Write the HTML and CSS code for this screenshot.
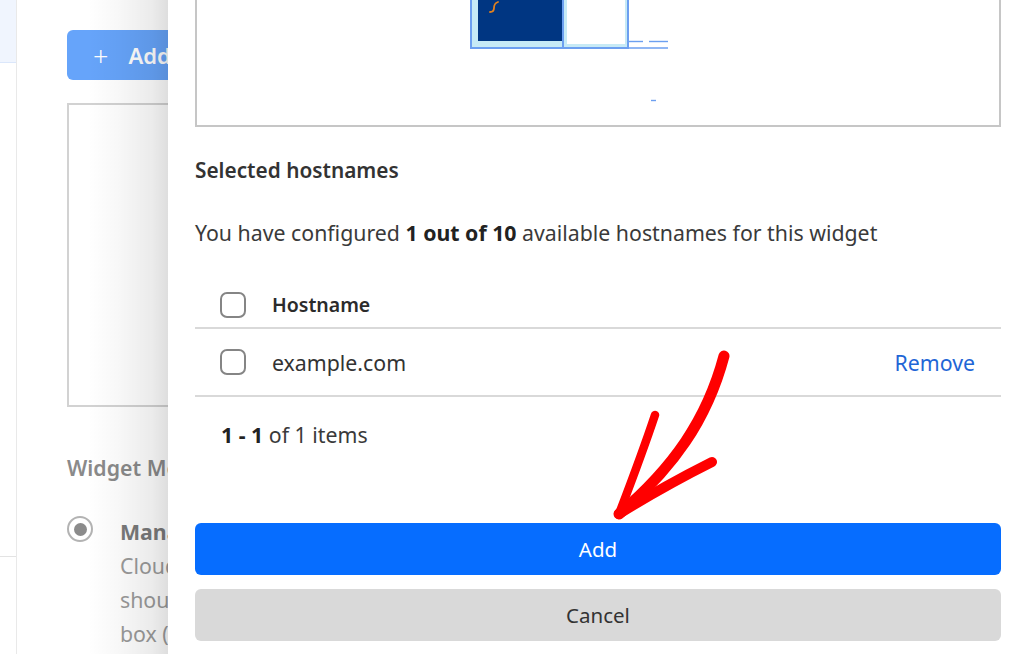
FILE: index.html
```html
<!DOCTYPE html>
<html lang="en">
<head>
<meta charset="utf-8">
<title>Selected hostnames</title>
<link rel="stylesheet" href="styles.css">
</head>
<body>
<div class="page">
  <div class="bg">
    <div class="rail">
      <div class="rail-top"></div>
      <div class="rail-mid"></div>
    </div>
    <div class="bg-main">
      <div class="bg-btn"><span class="plus">+</span><span>Add</span></div>
      <div class="bg-box"></div>
      <div class="bg-label">Widget Mode</div>
      <div class="bg-radio-row">
        <span class="radio"><span class="dot"></span></span>
        <div class="radio-text">
          <div class="radio-title">Managed</div>
          <div>Cloudflare</div>
          <div>should</div>
          <div>box (</div>
        </div>
      </div>
    </div>
    <div class="shade"></div>
  </div>

  <div class="drawer">
    <div class="preview">
      <svg class="preview-art" width="802" height="124" viewBox="197 0 802 124" xmlns="http://www.w3.org/2000/svg">
        <rect x="471" y="-2" width="92" height="50" fill="#c6eaf6" stroke="#6c9ff0" stroke-width="2"/>
        <rect x="478" y="-2" width="84" height="43" fill="#003682"/>
        <path d="M498,2 C495,3 494,6 494,8 C494,11 493,12 490,12" fill="none" stroke="#e0801e" stroke-width="1.8" stroke-linecap="round"/>
        <rect x="563" y="-2" width="65" height="50" fill="#c6eaf6" stroke="#6c9ff0" stroke-width="2"/>
        <rect x="567" y="-2" width="58" height="46" fill="#ffffff"/>
        <line x1="629" y1="41.5" x2="643" y2="41.5" stroke="#6c9ff0" stroke-width="1.4"/>
        <line x1="649" y1="41.5" x2="668" y2="41.5" stroke="#6c9ff0" stroke-width="1.4"/>
        <line x1="629" y1="48" x2="668" y2="48" stroke="#6c9ff0" stroke-width="1.4"/>
        <line x1="651" y1="100.5" x2="656" y2="100.5" stroke="#6c9ff0" stroke-width="1.4"/>
      </svg>
    </div>

    <h2 class="title">Selected hostnames</h2>
    <p class="info">You have configured <b>1 out of 10</b> available hostnames for this widget</p>

    <div class="table">
      <div class="tr th">
        <span class="cb"></span>
        <span class="cell-name">Hostname</span>
      </div>
      <div class="tr td">
        <span class="cb"></span>
        <span class="cell-name">example.com</span>
        <a class="remove">Remove</a>
      </div>
    </div>

    <div class="pager"><b>1 - 1</b> of 1 items</div>

    <div class="actions">
      <button class="btn btn-primary">Add</button>
      <button class="btn btn-secondary">Cancel</button>
    </div>
  </div>

  <svg class="arrow" width="140" height="190" viewBox="600 340 140 190" xmlns="http://www.w3.org/2000/svg">
    <g fill="none" stroke="#ff0000" stroke-linecap="round" stroke-linejoin="round">
      <path d="M724,356 C707,420 673,468 619,514" stroke-width="11"/>
      <path d="M655,415 C645,445 632,480 619,514" stroke-width="8.5"/>
      <path d="M712,462 C680,478 648,496 619,514" stroke-width="10"/>
    </g>
  </svg>
</div>
</body>
</html>
```

FILE: styles.css
```css
* { box-sizing: border-box; }
html, body {
  margin: 0;
  padding: 0;
  width: 1024px;
  height: 654px;
  overflow: hidden;
  background: #ffffff;
  font-family: "Noto Sans", "Open Sans", sans-serif;
  color: #333333;
}
.page {
  position: relative;
  display: flex;
  width: 1024px;
  height: 654px;
}

/* background page */
.bg {
  position: relative;
  width: 168px;
  flex: none;
  display: flex;
  overflow: hidden;
}
.rail {
  width: 17px;
  flex: none;
  border-right: 1px solid #e9e9e9;
  display: flex;
  flex-direction: column;
}
.rail-top {
  height: 63px;
  background: #f0f5fe;
  border-bottom: 1px solid #dbe7fb;
}
.rail-mid {
  height: 494px;
  border-bottom: 1px solid #e3e3e3;
}
.bg-main {
  padding: 30px 0 0 50px;
  flex: none;
  width: 300px;
}
.bg-btn {
  height: 50px;
  width: 200px;
  background: #66a4fa;
  border-radius: 6px;
  color: #ffffff;
  font-size: 22px;
  font-weight: 600;
  display: flex;
  align-items: center;
  padding-left: 26px;
  gap: 20px;
}
.bg-btn .plus {
  font-weight: 300;
  font-size: 27px;
}
.bg-box {
  margin-top: 23px;
  height: 304px;
  border: 2px solid #d2d2d2;
}
.bg-label {
  margin-top: 47px;
  font-size: 21.3px;
  line-height: 28px;
  font-weight: 600;
  color: #8a8a8a;
}
.bg-radio-row {
  margin-top: 33px;
  display: flex;
  gap: 27px;
}
.radio {
  width: 26px;
  height: 26px;
  border: 2px solid #b3b3b3;
  border-radius: 50%;
  display: flex;
  align-items: center;
  justify-content: center;
  flex: none;
  margin-top: 1px;
}
.radio .dot {
  width: 13px;
  height: 13px;
  border-radius: 50%;
  background: #8b8b8b;
}
.radio-text {
  font-size: 21.3px;
  line-height: 34px;
  color: #9a9a9a;
  margin-top: 0;
}
.radio-title {
  font-weight: 700;
  color: #7a7a7a;
}
.shade {
  position: absolute;
  top: 0;
  right: 0;
  bottom: 0;
  width: 80px;
  background: linear-gradient(to right, rgba(0,0,0,0) 0%, rgba(0,0,0,0.03) 40%, rgba(0,0,0,0.08) 80%, rgba(0,0,0,0.13) 100%);
  pointer-events: none;
}

/* drawer */
.drawer {
  flex: 1;
  background: #ffffff;
  padding: 0 23px 0 27px;
  display: flex;
  flex-direction: column;
}
.preview {
  height: 127px;
  border: 2px solid #c6c6c6;
  border-top: none;
  overflow: hidden;
}
.preview-art { display: block; }

.title {
  margin: 29px 0 0;
  font-size: 20.8px;
  line-height: 28px;
  font-weight: 600;
  color: #333333;
}
.info {
  margin: 35px 0 0;
  font-size: 21.3px;
  line-height: 28px;
  color: #3a3a3a;
}
.info b { font-weight: 700; color: #222222; }

.table { margin-top: 37px; }
.tr {
  display: flex;
  align-items: center;
  padding: 0 26px 0 25px;
  border-bottom: 2px solid #d9d9d9;
  font-size: 21.3px;
}
.th {
  height: 45px;
  padding-bottom: 2px;
}
.td { height: 68px; }
.cb {
  width: 26px;
  height: 26px;
  border: 2px solid #858585;
  border-radius: 7px;
  flex: none;
  margin-right: 26px;
}
.th .cell-name { font-weight: 600; font-size: 19.5px; color: #2b2b2b; }
.td .cell-name { color: #333333; flex: 1; }
.remove { color: #1f66d6; }

.pager {
  margin-top: 24px;
  padding-left: 26px;
  font-size: 21.3px;
  line-height: 28px;
  color: #3a3a3a;
}
.pager b { font-weight: 700; color: #222222; }

.actions {
  margin-top: 74px;
  display: flex;
  flex-direction: column;
  gap: 14px;
}
.btn {
  height: 52px;
  border: none;
  border-radius: 6px;
  font-family: inherit;
  font-size: 20.5px;
}
.btn-primary { background: #066dff; color: #ffffff; }
.btn-secondary { background: #d9d9d9; color: #333333; }

.arrow {
  position: absolute;
  left: 600px;
  top: 340px;
}
```
